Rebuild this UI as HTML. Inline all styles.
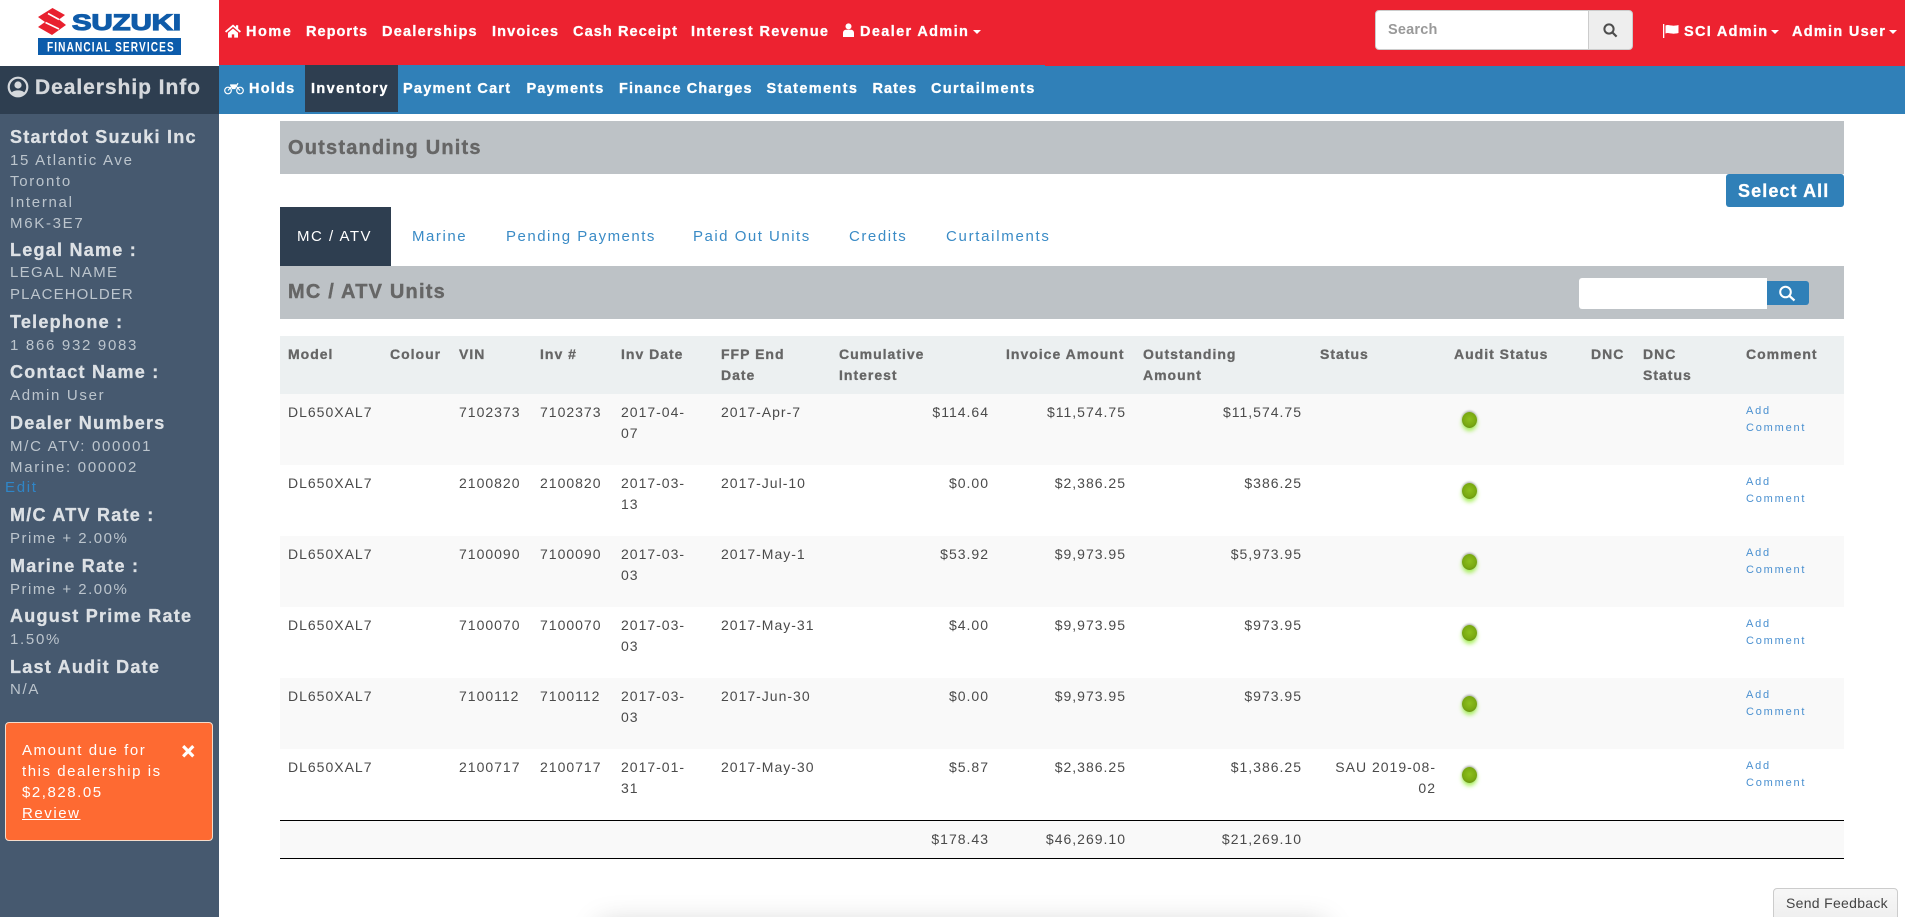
<!DOCTYPE html>
<html lang="en">
<head>
<meta charset="utf-8">
<title>Outstanding Units</title>
<style>
html,body{margin:0;padding:0;width:1905px;height:917px;overflow:hidden;background:#fff;font-family:"Liberation Sans",sans-serif;}
#p{position:relative;width:1905px;height:917px;overflow:hidden;background:#fff;}
.b{position:absolute;}
.t{position:absolute;white-space:nowrap;line-height:20px;}
.nav{font-weight:700;font-size:14.5px;letter-spacing:1.2px;color:#fff;-webkit-text-stroke:.3px #fff;}
.h{font-weight:700;font-size:18px;letter-spacing:1.25px;color:#dde1e5;-webkit-text-stroke:.3px #dde1e5;}
.s{font-size:15px;letter-spacing:1.7px;color:#bcc5cd;}
.tab{font-size:15px;letter-spacing:1.55px;color:#3a8bc6;}
.al{font-size:15px;letter-spacing:1.55px;color:#fff;}
.caret{position:absolute;width:0;height:0;border-left:4px solid transparent;border-right:4px solid transparent;border-top:4px solid #fff;}
table{position:absolute;left:280px;top:336px;width:1564px;table-layout:fixed;border-collapse:collapse;font-size:14px;letter-spacing:1px;color:#4a4a4a;}
th,td{padding:8px;line-height:21px;vertical-align:top;text-align:left;box-sizing:border-box;overflow:visible;}
th{font-weight:700;color:#666;background:#ecf0f1;height:58px;-webkit-text-stroke:.3px #666;}
tbody tr{height:71px;}
tbody tr:nth-child(odd) td{background:#f9f9f9;}
td.r{text-align:right;}
td.c{font-size:11px;line-height:17px;letter-spacing:1.8px;color:#4a90d0;padding-top:9px;}
.dot{width:15px;height:16px;border-radius:50%;margin:10px 0 0 10px;background:radial-gradient(circle at 50% 45%,#8dc01d 0,#7aaa12 55%,#55800e 100%);box-shadow:0 3px 4px rgba(140,235,40,.75),0 -1px 2px rgba(0,0,0,.35);}
tfoot td{background:#f9f9f9;height:38px;border-top:1px solid #000;border-bottom:1px solid #000;}
</style>
</head>
<body>
<div id="p">
  <!-- sidebar -->
  <div class="b" style="left:0;top:0;width:219px;height:66px;background:#fff;"></div>
  <svg class="b" style="left:0;top:0;" width="219" height="66" viewBox="0 0 219 66">
    <polygon points="38,17 52.5,8 65,15 59,19.5 66,25 52,35 38,27 45,22" fill="#e8202e"/>
    <path d="M48 13.5 L59 19.5 M45.5 22.5 L59 29" stroke="#fff" stroke-width="1.6" fill="none"/>
    <text x="72" y="30" font-family="Liberation Sans" font-weight="700" font-size="22" fill="#0f5ba9" stroke="#0f5ba9" stroke-width="1.2" textLength="109" lengthAdjust="spacingAndGlyphs">SUZUKI</text>
    <rect x="38" y="38" width="143" height="17" fill="#0c5cab"/>
    <text transform="translate(47,51.5) scale(.72,1)" font-family="Liberation Sans" font-weight="700" font-size="14" fill="#fff" textLength="176" lengthAdjust="spacing">FINANCIAL SERVICES</text>
  </svg>
  <div class="b" style="left:0;top:66px;width:219px;height:48px;background:#2e3e50;"></div>
  <div class="b" style="left:0;top:114px;width:219px;height:803px;background:#46596f;"></div>
  <svg class="b" style="left:7px;top:76px;" width="22" height="22" viewBox="0 0 22 22">
    <circle cx="11" cy="11" r="9.3" fill="none" stroke="#d5d8dc" stroke-width="2.2"/>
    <circle cx="11" cy="9" r="3.6" fill="#d5d8dc"/>
    <path d="M4.5 17 C6 13.5 16 13.5 17.5 17 L14 20 H8 Z" fill="#d5d8dc"/>
  </svg>
  <div class="t" style="left:35px;top:78px;font-size:21px;font-weight:700;letter-spacing:.95px;color:#d5d8dc;-webkit-text-stroke:.3px #d5d8dc;">Dealership Info</div>

  <div class="t h" style="left:10px;top:127px;">Startdot Suzuki Inc</div>
  <div class="t s" style="left:10px;top:151px;">15 Atlantic Ave</div>
  <div class="t s" style="left:10px;top:172px;">Toronto</div>
  <div class="t s" style="left:10px;top:193px;">Internal</div>
  <div class="t s" style="left:10px;top:214px;">M6K-3E7</div>
  <div class="t h" style="left:10px;top:240px;">Legal Name :</div>
  <div class="t s" style="left:10px;top:263px;letter-spacing:1.3px;">LEGAL NAME</div>
  <div class="t s" style="left:10px;top:285px;letter-spacing:1.1px;">PLACEHOLDER</div>
  <div class="t h" style="left:10px;top:312px;">Telephone :</div>
  <div class="t s" style="left:10px;top:336px;">1 866 932 9083</div>
  <div class="t h" style="left:10px;top:362px;">Contact Name :</div>
  <div class="t s" style="left:10px;top:386px;">Admin User</div>
  <div class="t h" style="left:10px;top:413px;">Dealer Numbers</div>
  <div class="t s" style="left:10px;top:437px;">M/C ATV: 000001</div>
  <div class="t s" style="left:10px;top:458px;">Marine: 000002</div>
  <div class="t s" style="left:5px;top:478px;color:#2f86c8;">Edit</div>
  <div class="t h" style="left:10px;top:505px;">M/C ATV Rate :</div>
  <div class="t s" style="left:10px;top:529px;letter-spacing:1.5px;">Prime + 2.00%</div>
  <div class="t h" style="left:10px;top:556px;">Marine Rate :</div>
  <div class="t s" style="left:10px;top:580px;letter-spacing:1.5px;">Prime + 2.00%</div>
  <div class="t h" style="left:10px;top:606px;">August Prime Rate</div>
  <div class="t s" style="left:10px;top:630px;">1.50%</div>
  <div class="t h" style="left:10px;top:657px;">Last Audit Date</div>
  <div class="t s" style="left:10px;top:680px;">N/A</div>

  <div class="b" style="left:5px;top:722px;width:208px;height:119px;box-sizing:border-box;background:#fe6a32;border:1px solid #f5dccb;border-radius:4px;"></div>
  <div class="t al" style="left:22px;top:741px;">Amount due for</div>
  <div class="t al" style="left:22px;top:762px;">this dealership is</div>
  <div class="t al" style="left:22px;top:783px;">$2,828.05</div>
  <div class="t al" style="left:22px;top:804px;text-decoration:underline;">Review</div>
  <div class="t" style="left:181.5px;top:741px;font-size:23px;font-weight:700;color:#fff;-webkit-text-stroke:.6px #fff;">×</div>

  <!-- top nav -->
  <div class="b" style="left:219px;top:0;width:1686px;height:66px;background:#ed2230;"></div>
  <div class="b" style="left:219px;top:66px;width:1686px;height:48px;background:#3080b8;"></div>
  <div class="b" style="left:219px;top:65px;width:826px;height:1px;background:#3080b8;"></div>

  <svg class="b" style="left:225px;top:23px;" width="16" height="16" viewBox="0 0 16 16" fill="#fff">
    <path d="M8 1.5 L0 8.3 L1.2 9.6 L8 3.9 L14.8 9.6 L16 8.3 L13.2 5.9 V2.2 H11 V4 Z"/>
    <path d="M3 9.8 L8 5.6 L13 9.8 V14.6 H9.2 V11.4 H6.8 V14.6 H3 Z"/>
  </svg>
  <div class="t nav" style="left:246px;top:22px;letter-spacing:1.5px;">Home</div>
  <div class="t nav" style="left:306px;top:22px;letter-spacing:1.04px;">Reports</div>
  <div class="t nav" style="left:382px;top:22px;letter-spacing:1.24px;">Dealerships</div>
  <div class="t nav" style="left:492px;top:22px;letter-spacing:1.14px;">Invoices</div>
  <div class="t nav" style="left:573px;top:22px;letter-spacing:1.1px;">Cash Receipt</div>
  <div class="t nav" style="left:691px;top:22px;letter-spacing:1.34px;">Interest Revenue</div>
  <svg class="b" style="left:843px;top:23px;" width="11" height="15" viewBox="0 0 11 15" fill="#fff">
    <circle cx="5.5" cy="3.4" r="3"/>
    <path d="M0 14 V10 C0 7.5 2 6.8 3 6.8 H8 C9 6.8 11 7.5 11 10 V14 Z"/>
  </svg>
  <div class="t nav" style="left:860px;top:22px;letter-spacing:1.36px;">Dealer Admin</div>
  <div class="caret" style="left:973px;top:30px;"></div>

  <div class="b" style="left:1374.5px;top:10px;width:214px;height:40px;box-sizing:border-box;background:#fff;border:1px solid #ccc;border-radius:4px 0 0 4px;"></div>
  <div class="b" style="left:1588px;top:10px;width:45px;height:40px;box-sizing:border-box;background:#eee;border:1px solid #ccc;border-radius:0 4px 4px 0;"></div>
  <div class="t" style="left:1388px;top:20px;font-size:14.5px;font-weight:700;color:#999;letter-spacing:.2px;">Search</div>
  <svg class="b" style="left:1603px;top:23px;" width="15" height="15" viewBox="0 0 15 15">
    <circle cx="6" cy="6" r="4.6" fill="none" stroke="#4d4d4d" stroke-width="2"/>
    <path d="M9.6 9.6 L13.6 13.6" stroke="#4d4d4d" stroke-width="2.2"/>
  </svg>
  <svg class="b" style="left:1663px;top:24px;" width="16" height="14" viewBox="0 0 16 14" fill="#fff">
    <rect x="0" y="0" width="1.3" height="14"/>
    <path d="M2.5 1.5 C6 0 8 3 15.5 1 V9 C8 11 6 8 2.5 9.5 Z"/>
  </svg>
  <div class="t nav" style="left:1684px;top:22px;letter-spacing:1.3px;">SCI Admin</div>
  <div class="caret" style="left:1771px;top:30px;"></div>
  <div class="t nav" style="left:1792px;top:22px;letter-spacing:1.28px;">Admin User</div>
  <div class="caret" style="left:1889px;top:30px;"></div>

  <svg class="b" style="left:224px;top:81px;" width="20" height="14" viewBox="0 0 20 14" fill="none" stroke="#fff" stroke-width="1.2">
    <circle cx="4" cy="9.5" r="3.3"/>
    <circle cx="16" cy="9.5" r="3.3"/>
    <path d="M4 9.5 L8 5 H12 L16 9.5 M6 4.2 H13 L14 2.2" />
    <path d="M7 4 H12 L11 7.5 H8.5 Z" fill="#fff"/>
  </svg>
  <div class="t nav" style="left:249px;top:79px;letter-spacing:1.24px;">Holds</div>
  <div class="b" style="left:305px;top:65px;width:93px;height:47px;background:#2e3e50;"></div>
  <div class="t nav" style="left:311px;top:79px;letter-spacing:1.4px;">Inventory</div>
  <div class="t nav" style="left:403px;top:79px;letter-spacing:1.24px;">Payment Cart</div>
  <div class="t nav" style="left:526.5px;top:79px;letter-spacing:1.19px;">Payments</div>
  <div class="t nav" style="left:619px;top:79px;letter-spacing:1.12px;">Finance Charges</div>
  <div class="t nav" style="left:766.5px;top:79px;letter-spacing:1.36px;">Statements</div>
  <div class="t nav" style="left:872.5px;top:79px;letter-spacing:1.04px;">Rates</div>
  <div class="t nav" style="left:931px;top:79px;letter-spacing:1.34px;">Curtailments</div>

  <!-- content -->
  <div class="b" style="left:280px;top:121px;width:1564px;height:53px;background:#bdc2c6;"></div>
  <div class="t" style="left:288px;top:138px;font-size:20px;font-weight:700;letter-spacing:1.2px;color:#666;-webkit-text-stroke:.4px #666;">Outstanding Units</div>
  <div class="b" style="left:1726px;top:174px;width:118px;height:33px;background:#3080b8;border-radius:3px;"></div>
  <div class="t" style="left:1738px;top:181px;font-size:18px;font-weight:700;letter-spacing:1.1px;color:#fff;-webkit-text-stroke:.3px #fff;">Select All</div>

  <div class="b" style="left:280px;top:207px;width:111px;height:59px;background:#2e3e50;"></div>
  <div class="t" style="left:297px;top:227px;font-size:15px;letter-spacing:1.5px;color:#fff;">MC / ATV</div>
  <div class="t tab" style="left:412px;top:227px;">Marine</div>
  <div class="t tab" style="left:506px;top:227px;letter-spacing:1.5px;">Pending Payments</div>
  <div class="t tab" style="left:693px;top:227px;letter-spacing:1.5px;">Paid Out Units</div>
  <div class="t tab" style="left:849px;top:227px;">Credits</div>
  <div class="t tab" style="left:946px;top:227px;letter-spacing:1.7px;">Curtailments</div>

  <div class="b" style="left:280px;top:266px;width:1564px;height:53px;background:#bdc2c6;"></div>
  <div class="t" style="left:288px;top:282px;font-size:20px;font-weight:700;letter-spacing:1.2px;color:#666;-webkit-text-stroke:.4px #666;">MC / ATV Units</div>
  <div class="b" style="left:1579px;top:278px;width:188px;height:31px;background:#fff;border-radius:3px 0 0 3px;"></div>
  <div class="b" style="left:1767px;top:281px;width:42px;height:24px;background:#3080b8;border-radius:0 3px 3px 0;"></div>
  <svg class="b" style="left:1778px;top:285px;" width="18" height="17" viewBox="0 0 18 17">
    <circle cx="7.5" cy="7" r="5.3" fill="none" stroke="#fff" stroke-width="2"/>
    <path d="M11.5 11 L16.5 15.5" stroke="#fff" stroke-width="2.2"/>
  </svg>

  <table>
    <colgroup>
      <col style="width:102px"><col style="width:69px"><col style="width:81px"><col style="width:81px"><col style="width:100px"><col style="width:118px"><col style="width:166px"><col style="width:137px"><col style="width:176px"><col style="width:134px"><col style="width:139px"><col style="width:52px"><col style="width:103px"><col style="width:106px">
    </colgroup>
    <thead>
      <tr>
        <th>Model</th><th>Colour</th><th>VIN</th><th>Inv #</th><th>Inv Date</th><th>FFP End<br>Date</th><th>Cumulative<br>Interest</th>
        <th style="padding-left:9px;white-space:nowrap;">Invoice Amount</th><th style="padding-left:9px;">Outstanding<br>Amount</th><th style="padding-left:10px;">Status</th><th style="padding-left:10px;">Audit Status</th><th>DNC</th><th>DNC<br>Status</th><th>Comment</th>
      </tr>
    </thead>
    <tbody>
      <tr><td>DL650XAL7</td><td></td><td>7102373</td><td>7102373</td><td>2017-04-<br>07</td><td>2017-Apr-7</td><td class="r">$114.64</td><td class="r">$11,574.75</td><td class="r">$11,574.75</td><td></td><td><div class="dot"></div></td><td></td><td></td><td class="c">Add<br>Comment</td></tr>
      <tr><td>DL650XAL7</td><td></td><td>2100820</td><td>2100820</td><td>2017-03-<br>13</td><td>2017-Jul-10</td><td class="r">$0.00</td><td class="r">$2,386.25</td><td class="r">$386.25</td><td></td><td><div class="dot"></div></td><td></td><td></td><td class="c">Add<br>Comment</td></tr>
      <tr><td>DL650XAL7</td><td></td><td>7100090</td><td>7100090</td><td>2017-03-<br>03</td><td>2017-May-1</td><td class="r">$53.92</td><td class="r">$9,973.95</td><td class="r">$5,973.95</td><td></td><td><div class="dot"></div></td><td></td><td></td><td class="c">Add<br>Comment</td></tr>
      <tr><td>DL650XAL7</td><td></td><td>7100070</td><td>7100070</td><td>2017-03-<br>03</td><td>2017-May-31</td><td class="r">$4.00</td><td class="r">$9,973.95</td><td class="r">$973.95</td><td></td><td><div class="dot"></div></td><td></td><td></td><td class="c">Add<br>Comment</td></tr>
      <tr><td>DL650XAL7</td><td></td><td>7100112</td><td>7100112</td><td>2017-03-<br>03</td><td>2017-Jun-30</td><td class="r">$0.00</td><td class="r">$9,973.95</td><td class="r">$973.95</td><td></td><td><div class="dot"></div></td><td></td><td></td><td class="c">Add<br>Comment</td></tr>
      <tr><td>DL650XAL7</td><td></td><td>2100717</td><td>2100717</td><td>2017-01-<br>31</td><td>2017-May-30</td><td class="r">$5.87</td><td class="r">$2,386.25</td><td class="r">$1,386.25</td><td class="r">SAU 2019-08-<br>02</td><td><div class="dot"></div></td><td></td><td></td><td class="c">Add<br>Comment</td></tr>
    </tbody>
    <tfoot>
      <tr><td></td><td></td><td></td><td></td><td></td><td></td><td class="r">$178.43</td><td class="r">$46,269.10</td><td class="r">$21,269.10</td><td></td><td></td><td></td><td></td><td></td></tr>
    </tfoot>
  </table>

  <div class="b" style="left:600px;top:925px;width:725px;height:30px;box-shadow:0 0 30px rgba(0,0,0,.22);background:#ddd;"></div>
  <div class="b" style="left:1773px;top:888px;width:125px;height:34px;box-sizing:border-box;background:linear-gradient(#f7f7f7,#eee);border:1px solid #ccc;border-radius:4px 4px 0 0;"></div>
  <div class="t" style="left:1786px;top:893px;font-size:14px;letter-spacing:.3px;color:#444;">Send Feedback</div>
</div>
</body>
</html>
